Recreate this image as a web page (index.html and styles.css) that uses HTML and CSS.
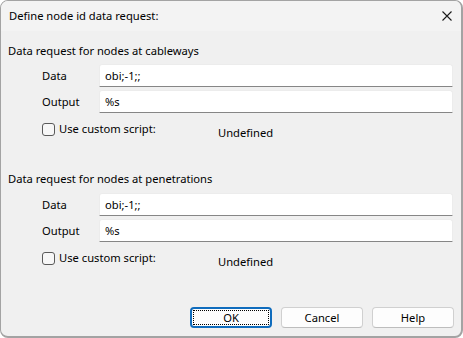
FILE: index.html
```html
<!DOCTYPE html>
<html>
<head>
<meta charset="utf-8">
<link rel="stylesheet" href="styles.css">
</head>
<body>
<div class="window">
  <div class="titlebar">
    <span class="title">Define node id data request:</span>
    <svg class="close" width="10" height="10" viewBox="0 0 10 10"><path d="M0.5 0.5 L9.5 9.5 M9.5 0.5 L0.5 9.5" stroke="#1a1a1a" stroke-width="1.1" fill="none"/></svg>
  </div>
  <div class="content">
    <div class="section">
      <div class="heading">Data request for nodes at cableways</div>
      <div class="fields">
        <label class="label">Data</label>
        <div class="input">obi;-1;;</div>
        <label class="label">Output</label>
        <div class="input">%s</div>
      </div>
      <div class="checkrow">
        <span class="check"></span>
        <span class="checklabel">Use custom script:</span>
        <span class="undef">Undefined</span>
      </div>
    </div>
    <div class="section second">
      <div class="heading">Data request for nodes at penetrations</div>
      <div class="fields">
        <label class="label">Data</label>
        <div class="input">obi;-1;;</div>
        <label class="label">Output</label>
        <div class="input">%s</div>
      </div>
      <div class="checkrow">
        <span class="check"></span>
        <span class="checklabel">Use custom script:</span>
        <span class="undef">Undefined</span>
      </div>
    </div>
  </div>
  <div class="footer">
    <button class="btn default"><span class="focus">OK</span></button>
    <button class="btn">Cancel</button>
    <button class="btn">Help</button>
  </div>
</div>
</body>
</html>
```

FILE: styles.css
```css
html, body {
  margin: 0;
  padding: 0;
  background: #ffffff;
}
body {
  font-family: "Noto Sans", "Open Sans", sans-serif;
  font-size: 11.2px;
  color: #000;
}
.window {
  box-sizing: border-box;
  width: 463px;
  height: 338px;
  border: 1px solid #a3a3a3;
  border-right-width: 2px;
  border-bottom-width: 2px;
  border-radius: 8px;
  overflow: hidden;
  background: #f0f0f0;
  display: flex;
  flex-direction: column;
}
.titlebar {
  height: 30px;
  background: #f3f3f3;
  display: flex;
  align-items: center;
  justify-content: space-between;
  padding: 0 9px 0 8px;
}
.title {
  line-height: 16px;
}
.close {
  display: block;
}
.content {
  flex: 1;
  padding: 12px 8px 0 7px;
}
.heading {
  line-height: 16px;
}
.fields {
  display: grid;
  grid-template-columns: 57px 1fr;
  row-gap: 3px;
  margin-top: 5px;
  padding-left: 34px;
  align-items: center;
}
.label {
  line-height: 16px;
}
.input {
  box-sizing: border-box;
  height: 23px;
  background: #fff;
  border: 1px solid #ececec;
  border-bottom: 1px solid #868686;
  border-radius: 3px 3px 0 0;
  padding: 0 5px;
  line-height: 21px;
}
.checkrow {
  display: flex;
  align-items: flex-start;
  margin-top: 9px;
  padding-left: 34px;
  height: 17px;
}
.check {
  box-sizing: border-box;
  width: 13px;
  height: 13px;
  border: 1px solid #5a5a5a;
  border-radius: 3px;
  background: #f7f7f7;
  margin-top: 1px;
}
.checklabel {
  margin-left: 4px;
  line-height: 14px;
  width: 159px;
}
.undef {
  line-height: 16px;
  margin-top: 3px;
}
.second {
  margin-top: 32px;
}
.second .fields {
  margin-top: 6px;
}
.footer {
  display: flex;
  justify-content: flex-end;
  gap: 9px;
  padding: 0 7px 8px 0;
}
.btn {
  box-sizing: border-box;
  width: 82px;
  height: 21px;
  border: 1px solid #d0d0d0;
  border-bottom-color: #bdbdbd;
  border-radius: 4px;
  background: #fdfdfd;
  font-family: inherit;
  font-size: 11.2px;
  color: #000;
  padding: 0;
  line-height: 17px;
}
.btn.default {
  border: 2px solid #0f6cbd;
  padding: 1px;
}
.focus {
  display: block;
  box-sizing: border-box;
  height: 100%;
  border: 1px dotted #000;
  line-height: 13px;
}
```
